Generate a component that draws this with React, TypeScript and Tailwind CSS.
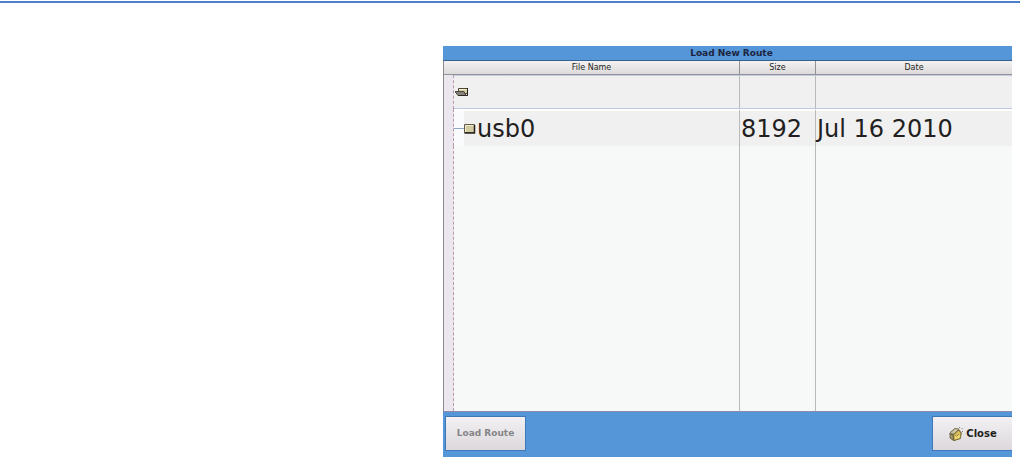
const entries = [{ name: "usb0", size: "8192", date: "Jul 16 2010" }];

export default function App() {
  return (
    <main className="bg-white font-['DejaVu_Sans',sans-serif] text-[#231f20]">
      <div className="pt-px">
        <div className="h-[2px] bg-[#4a80cc]" />
      </div>

      <section className="ml-[443px] mr-2 mt-[43px] bg-[#5596d8]">
        <h1 className="border-b border-[#34618f] pl-2 text-center text-[9px] font-bold leading-[14px] text-[#1d2440]">
          Load New Route
        </h1>

        <FileTable />

        <div className="flex items-center justify-between border-t border-[#8e8ba8] pb-[6px] pl-[2px] pt-1">
          <button
            type="button"
            disabled
            className="h-[35px] w-[81px] border border-[#3f78b8] bg-linear-to-b from-[#f3f1f4] to-[#dcd8dc] text-[9px] font-bold text-[#858487]"
          >
            Load Route
          </button>
          <button
            type="button"
            className="flex h-[35px] w-20 items-center justify-center gap-[2px] border border-r-0 border-[#3f78b8] bg-linear-to-b from-[#f3f1f4] to-[#dcd8dc] text-[10px] font-bold"
          >
            <CloseIcon />
            Close
          </button>
        </div>
      </section>
    </main>
  );
}

function FileTable() {
  return (
    <table className="w-full table-fixed border-separate border-spacing-0 border-l border-[#8d8a8f] bg-[#f7f9f9] text-left">
      <colgroup>
        <col className="w-[10px]" />
        <col />
        <col className="w-[76px]" />
        <col className="w-[196px]" />
      </colgroup>
      <thead>
        <tr className="h-[14px] bg-linear-to-b from-[#f3f1f2] to-[#dcd9db] text-center text-[8px] leading-[13px]">
          <th
            colSpan={2}
            className="border-b border-r border-[#8f9296] p-0 font-normal"
          >
            File Name
          </th>
          <th className="border-b border-r border-[#8f9296] p-0 font-normal">
            Size
          </th>
          <th className="border-b border-[#8f9296] p-0 font-normal">Date</th>
        </tr>
      </thead>
      <tbody className="text-2xl leading-[34px]">
        <tr className="h-[34px] bg-[#f0f0f0]">
          <td className="border-r border-dashed border-[#b79aac] bg-[#ece6ee] p-0" />
          <td className="border-b border-r border-t border-b-[#bfcbe6] border-r-[#b6babb] border-t-[#c9cbe0] p-0">
            <FolderIcon />
          </td>
          <td className="border-b border-r border-t border-b-[#bfcbe6] border-r-[#b6babb] border-t-[#c9cbe0] p-0" />
          <td className="border-b border-t border-b-[#bfcbe6] border-t-[#c9cbe0] p-0" />
        </tr>
        {entries.map((entry) => (
          <tr key={entry.name} className="h-[37px] bg-[#f0f0f0]">
            <td className="border-r border-dashed border-[#b79aac] bg-[#ece6ee] p-0" />
            <td className="border-r border-t-2 border-r-[#b6babb] border-t-white p-0">
              <div className="flex">
                <span className="flex h-[35px] w-[10px] items-center bg-[#fafbfc]">
                  <span className="h-px w-full bg-[#8ea6cc]" />
                </span>
                <span className="flex items-center">
                  <DriveIcon />
                </span>
                <span className="pl-px pt-px">{entry.name}</span>
              </div>
            </td>
            <td className="border-r border-t-2 border-r-[#b6babb] border-t-white p-0 pl-px pt-px">
              {entry.size}
            </td>
            <td className="border-t-2 border-white p-0 pl-px pt-px">
              {entry.date}
            </td>
          </tr>
        ))}
        <tr className="h-[265px]">
          <td className="border-r border-dashed border-[#b79aac] bg-[#ece6ee] p-0" />
          <td className="border-r border-[#b6babb] p-0" />
          <td className="border-r border-[#b6babb] p-0" />
          <td className="p-0" />
        </tr>
      </tbody>
    </table>
  );
}

function FolderIcon() {
  return (
    <svg width="14" height="10" viewBox="0 0 14 10" className="ml-px block">
      <path d="M3.5 1.5h9v5h-9z" fill="#d9d0a5" stroke="#4a4536" />
      <path d="M4 2.5h8" stroke="#f2edcf" />
      <path d="M12.5 1v8" stroke="#231f1a" />
      <path d="M0 4.5h9l2 4H3z" fill="#86827a" stroke="#4b4740" />
      <path d="M3 8.5h10" stroke="#2c2823" />
    </svg>
  );
}

function DriveIcon() {
  return (
    <svg width="12" height="10" viewBox="0 0 12 10" className="block">
      <path d="M0.5 0.5h10v8H0.5z" fill="#d3cba2" stroke="#5f5b4a" />
      <path d="M1.5 8V1.5H10" fill="none" stroke="#f1ecce" />
      <path d="M0.5 9H10.5V1" fill="none" stroke="#25221d" strokeWidth="1.5" />
    </svg>
  );
}

function CloseIcon() {
  return (
    <svg width="16" height="16" viewBox="0 0 16 16">
      <path d="M2 6l5-4 4 1 3 4-2 6-6 2-4-3z" fill="#8d8460" />
      <path d="M1.5 7.5l5.500-5 4 .5-5 5z" fill="#cdc5a8" stroke="#746c50" strokeWidth=".8" />
      <path d="M2 8l3 1 .5 5.500L2 12z" fill="#a49a6c" stroke="#5d563c" strokeWidth=".8" />
      <path d="M5.500 9l5-5 2.500 3-.5 5.500-6.500 2z" fill="#d9c05a" stroke="#6f6030" strokeWidth=".8" />
      <path d="M7 9.500l2 1 2.500-2.500v3.500L7 13z" fill="#f0dc7c" />
      <path d="M7 9l1.500 1.500L11 8" fill="none" stroke="#8a7430" strokeWidth=".8" />
      <path d="M11 2l1-1M13.500 2l1 1M14.500 5v1" stroke="#6b675e" strokeWidth=".8" />
    </svg>
  );
}
